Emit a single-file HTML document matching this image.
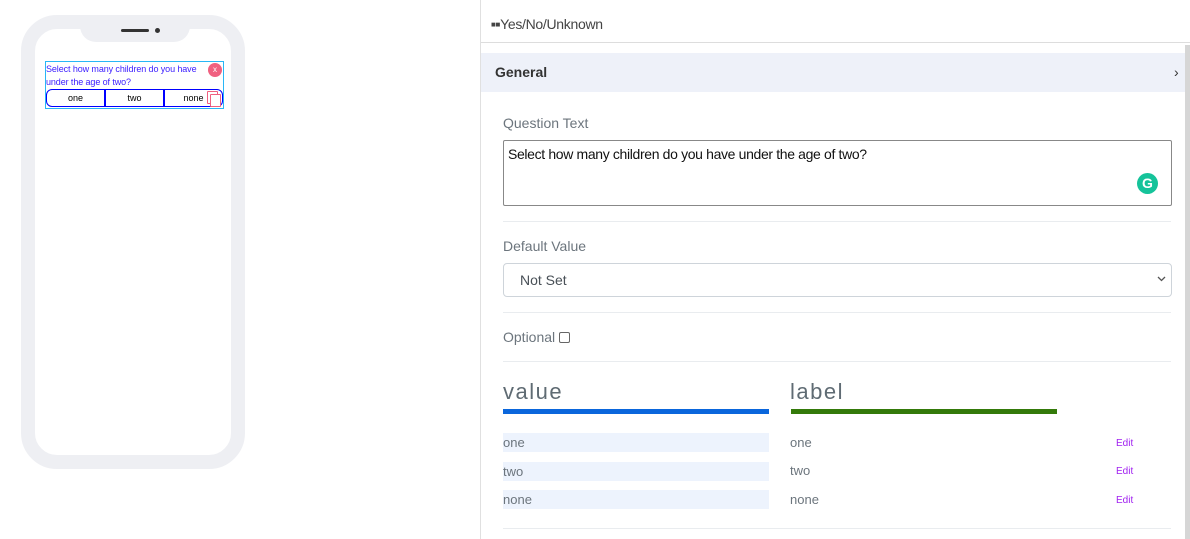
<!DOCTYPE html>
<html><head><style>
body{margin:0;width:1190px;height:539px;background:#fff;font-family:"Liberation Sans",sans-serif;position:relative;overflow:hidden}
.abs{position:absolute}
.phone{left:21px;top:15px;width:196px;height:426px;border:14px solid #eeeff3;border-radius:36px;background:#fff}
.notch{left:80px;top:15px;width:110px;height:27px;background:#eeeff3;border-radius:0 0 16px 16px}
.lbl{color:#6c757d;font-size:14px}
.hr{left:503px;width:668px;height:1px;background:#e9ecef}
.vrow{left:503px;width:266px;height:19px;background:#edf3fd;color:#6c757d;font-size:13px;line-height:19px}
.lrow{left:790px;color:#6c757d;font-size:13px}
.edit{left:1116px;color:#a020f0;font-size:10px}
</style></head><body>
<div class="abs phone"></div>
<div class="abs notch"></div>
<div class="abs" style="left:121px;top:29px;width:28px;height:3px;background:#333;border-radius:2px"></div>
<div class="abs" style="left:155px;top:28px;width:5px;height:5px;background:#333;border-radius:50%"></div>
<div class="abs" style="left:45px;top:61px;width:177px;height:46px;border:1px solid #29b6f6"></div>
<div class="abs" style="left:46px;top:63px;color:#3a1cff;font-size:9px;line-height:13px;width:165px;letter-spacing:-0.1px">Select how many children do you have under the age of two?</div>
<div class="abs" style="left:208px;top:63px;width:14px;height:14px;border-radius:50%;background:#f06080;color:#fff;font-size:8px;text-align:center;line-height:14px">x</div>
<div class="abs" style="left:46px;top:89px;width:175px;height:16px;border:1px solid #00f;border-radius:6px;display:flex;font-size:9px;line-height:16px">
<div style="flex:1;text-align:center;border-right:2px solid #00f">one</div>
<div style="flex:1;text-align:center;border-right:2px solid #00f">two</div>
<div style="flex:1;text-align:center">none</div></div>
<div class="abs" style="left:207px;top:91px;width:9px;height:11px;border:1.5px solid #f06080;border-radius:1px"></div>
<div class="abs" style="left:210px;top:94px;width:9px;height:11px;border:1.5px solid #f06080;border-radius:1px;background:#fff"></div>

<div class="abs" style="left:480px;top:0;width:1px;height:539px;background:#e0e0e0"></div>
<div class="abs" style="left:481px;top:42px;width:709px;height:1px;background:#ddd"></div>
<div class="abs" style="left:491px;top:16px;font-size:14px;color:#444;letter-spacing:-0.3px"><span style="font-size:8px;vertical-align:2px">■■</span>Yes/No/Unknown</div>
<div class="abs" style="left:1185px;top:45px;width:5px;height:494px;background:#d6d6d6"></div>
<div class="abs" style="left:481px;top:53px;width:704px;height:39px;background:#eef1f9"></div>
<div class="abs" style="left:495px;top:64px;font-size:14px;font-weight:bold;color:#333">General</div>
<div class="abs" style="left:1174px;top:64px;font-size:14px;color:#333">›</div>
<div class="abs lbl" style="left:503px;top:115px">Question Text</div>
<div class="abs" style="left:503px;top:140px;width:667px;height:64px;border:1px solid #888;border-radius:2px"></div>
<div class="abs" style="left:508px;top:146px;font-size:14px;color:#111;letter-spacing:-0.35px">Select how many children do you have under the age of two?</div>
<div class="abs" style="left:1137px;top:173px;width:21px;height:21px;border-radius:50%;background:#15c39a;color:#fff;font-weight:bold;font-size:14px;text-align:center;line-height:21px">G</div>
<div class="abs hr" style="top:221px"></div>
<div class="abs lbl" style="left:503px;top:238px">Default Value</div>
<div class="abs" style="left:503px;top:263px;width:667px;height:32px;border:1px solid #ced4da;border-radius:4px"></div>
<div class="abs" style="left:520px;top:272px;font-size:14px;color:#495057">Not Set</div>
<svg class="abs" style="left:1157px;top:276px" width="9" height="6"><path d="M1 1l3.5 3.5L8 1" stroke="#555" stroke-width="1.3" fill="none"/></svg>
<div class="abs hr" style="top:312px"></div>
<div class="abs lbl" style="left:503px;top:329px">Optional <span style="display:inline-block;width:9px;height:9px;border:1px solid #666;border-radius:2px;vertical-align:-1px"></span></div>
<div class="abs hr" style="top:361px"></div>
<div class="abs" style="left:503px;top:379px;font-size:22px;letter-spacing:1.5px;color:#5f6b73">value</div>
<div class="abs" style="left:790px;top:379px;font-size:22px;letter-spacing:1.5px;color:#5f6b73">label</div>
<div class="abs" style="left:503px;top:409px;width:266px;height:5px;background:#0a66dc"></div>
<div class="abs" style="left:791px;top:409px;width:266px;height:5px;background:#347a0a"></div>
<div class="abs vrow" style="top:433px">one</div>
<div class="abs vrow" style="top:462px">two</div>
<div class="abs vrow" style="top:490px">none</div>
<div class="abs lrow" style="top:435px">one</div>
<div class="abs lrow" style="top:463px">two</div>
<div class="abs lrow" style="top:492px">none</div>
<div class="abs edit" style="top:438px">Edit</div>
<div class="abs edit" style="top:466px">Edit</div>
<div class="abs edit" style="top:495px">Edit</div>
<div class="abs hr" style="top:528px"></div>
</body></html>
